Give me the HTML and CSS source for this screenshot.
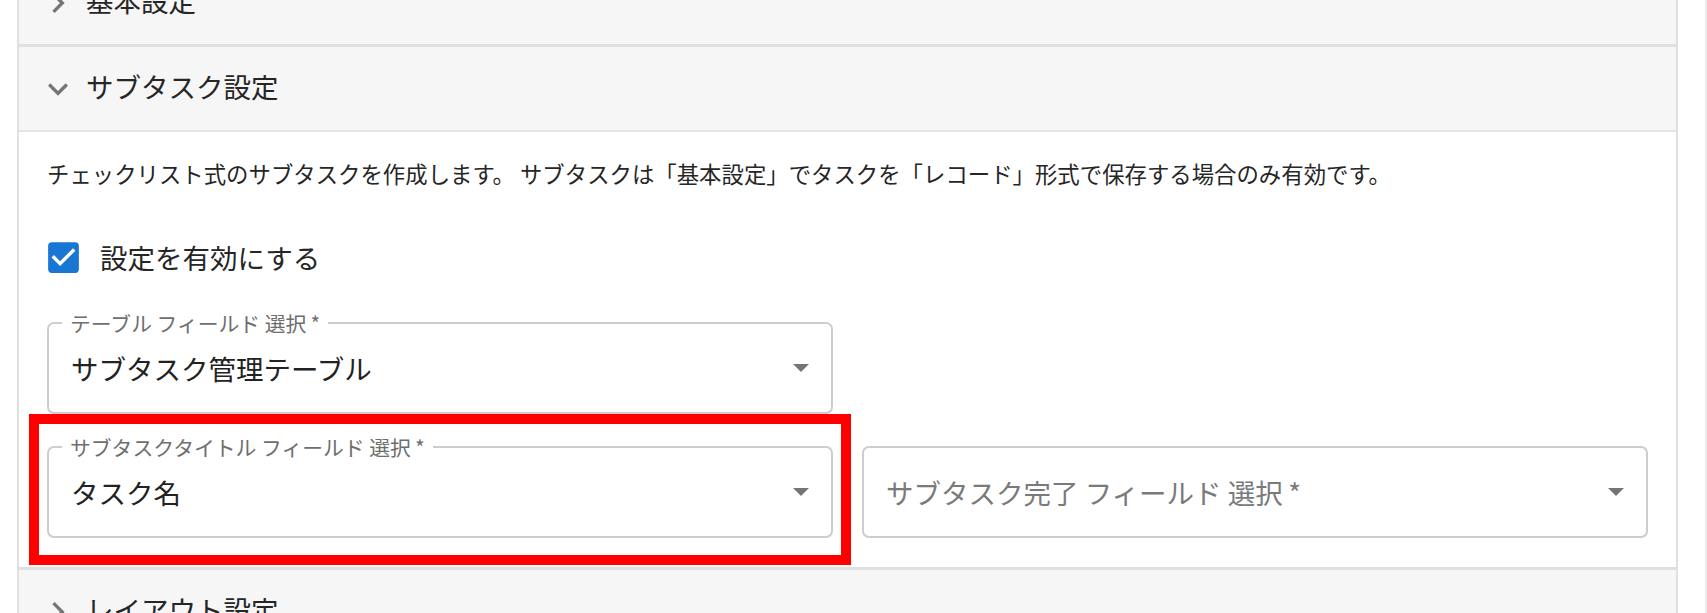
FILE: index.html
```html
<!DOCTYPE html>
<html lang="ja">
<head>
<meta charset="utf-8">
<title>サブタスク設定</title>
<link rel="stylesheet" href="styles.css">
</head>
<body>
<div class="page">
  <div class="panel">
    <section class="section">
      <div class="summary">
        <svg class="chev collapsed" viewBox="0 0 24 24"><path d="M16.59 8.59 12 13.17 7.41 8.59 6 10l6 6 6-6z"/></svg>
        <span class="summary-title">基本設定</span>
      </div>
    </section>
    <section class="section">
      <div class="summary expanded">
        <svg class="chev" viewBox="0 0 24 24"><path d="M16.59 8.59 12 13.17 7.41 8.59 6 10l6 6 6-6z"/></svg>
        <span class="summary-title">サブタスク設定</span>
      </div>
      <div class="details">
        <p class="desc">チェックリスト式のサブタスクを作成します。 サブタスクは「基本設定」でタスクを「レコード」形式で保存する場合のみ有効です。</p>
        <label class="check-row">
          <svg class="check" viewBox="0 0 24 24"><path d="M19 3H5c-1.11 0-2 .9-2 2v14c0 1.1.89 2 2 2h14c1.11 0 2-.9 2-2V5c0-1.1-.89-2-2-2zm-9 14l-5-5 1.41-1.41L10 14.17l7.59-7.59L19 8l-9 9z"/></svg>
          <span class="check-label">設定を有効にする</span>
        </label>
        <div class="grid">
          <div class="cell">
            <div class="field">
              <span class="field-label">テーブル フィールド 選択&thinsp;*</span>
              <span class="value">サブタスク管理テーブル</span>
              <svg class="arrow" viewBox="0 0 10 5"><path d="M0 0l5 5 5-5z"/></svg>
            </div>
          </div>
          <div class="cell"></div>
          <div class="cell">
            <div class="field">
              <span class="field-label">サブタスクタイトル フィールド 選択&thinsp;*</span>
              <span class="value">タスク名</span>
              <svg class="arrow" viewBox="0 0 10 5"><path d="M0 0l5 5 5-5z"/></svg>
            </div>
            <div class="annotation"></div>
          </div>
          <div class="cell">
            <div class="field">
              <span class="value placeholder">サブタスク完了 フィールド 選択&thinsp;*</span>
              <svg class="arrow" viewBox="0 0 10 5"><path d="M0 0l5 5 5-5z"/></svg>
            </div>
          </div>
        </div>
      </div>
    </section>
    <section class="section">
      <div class="summary">
        <svg class="chev collapsed" viewBox="0 0 24 24"><path d="M16.59 8.59 12 13.17 7.41 8.59 6 10l6 6 6-6z"/></svg>
        <span class="summary-title">レイアウト設定</span>
      </div>
    </section>
  </div>
</div>
</body>
</html>
```
FILE: styles.css
```css
html {
  overflow: hidden;
}

html, body {
  margin: 0;
  padding: 0;
  background: #ffffff;
}

body {
  font-family: "Noto Sans CJK JP", "Noto Sans", sans-serif;
  color: #212121;
}

.page {
  box-sizing: border-box;
  width: 1707px;
  min-height: 660px;
  padding: 0 27px 0 17px;
  border-right: 2px solid #ececec;
}

.panel {
  margin-top: -39px;
  border-left: 2px solid #e0e0e0;
  border-right: 2px solid #e0e0e0;
}

.section + .section {
  border-top: 3px solid #e0e0e0;
}

.summary {
  height: 83px;
  background: #f6f6f6;
  display: flex;
  align-items: center;
  padding: 0 28px 0 19px;
}

.summary.expanded {
  border-bottom: 2px solid #e4e4e4;
}

.chev {
  width: 40px;
  height: 40px;
  fill: #757575;
  flex: none;
  margin-right: 8px;
}

.chev.collapsed {
  transform: rotate(-90deg);
}

.summary-title {
  font-size: 27.5px;
  line-height: 34px;
  margin-bottom: 6px;
  color: #262626;
}

.details {
  padding: 25px 28px 29px;
  background: #ffffff;
}

.desc {
  margin: 0;
  font-size: 22.4px;
  line-height: 32px;
  color: #262626;
  white-space: nowrap;
}

.check-row {
  margin-top: 42px;
  height: 53px;
  display: flex;
  align-items: center;
}

.check {
  width: 41px;
  height: 41px;
  fill: #1976d2;
  margin-left: -4px;
  margin-right: 16px;
  flex: none;
}

.check-label {
  font-size: 27.5px;
  line-height: 34px;
  margin-bottom: 2px;
  color: #262626;
}

.grid {
  margin-top: 38px;
  display: grid;
  grid-template-columns: 1fr 1fr;
  column-gap: 29px;
  row-gap: 32px;
}

.cell {
  position: relative;
}

.field {
  position: relative;
  box-sizing: border-box;
  height: 92px;
  border: 2px solid #cdcdcd;
  border-radius: 7px;
  display: flex;
  align-items: center;
  padding: 0 22px 0 22px;
  background: #ffffff;
}

.field-label {
  position: absolute;
  top: -13px;
  left: 13px;
  padding: 0 8px;
  background: #ffffff;
  font-size: 20.8px;
  line-height: 24px;
  color: #6e6e6e;
  white-space: nowrap;
}

.value {
  flex: 1;
  font-size: 27.5px;
  line-height: 34px;
  color: #222222;
  white-space: nowrap;
}

.value.placeholder {
  color: #7a7a7a;
}

.arrow {
  width: 16px;
  height: 8px;
  fill: #757575;
  flex: none;
}

.annotation {
  position: absolute;
  top: -32px;
  bottom: -27px;
  left: -18px;
  right: -18px;
  border: 10px solid #ff0000;
  pointer-events: none;
}
```
